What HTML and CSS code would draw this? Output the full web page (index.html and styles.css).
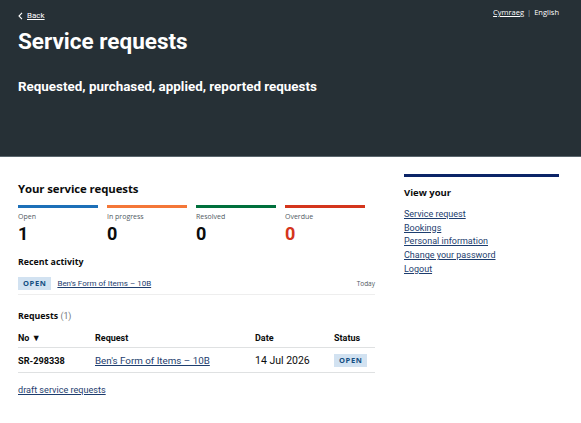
FILE: index.html
```html
<!DOCTYPE html>
<html lang="en">
<head>
<meta charset="utf-8">
<title>Service requests</title>
<link rel="stylesheet" href="styles.css">
</head>
<body>
<header class="hero">
  <div class="hero-top">
    <a class="back" href="#"><svg class="chev" width="5" height="8" viewBox="0 0 5 8"><path d="M4 0.8 L1 4 L4 7.2" fill="none" stroke="#fff" stroke-width="1.1"/></svg><span class="back-text">Back</span></a>
    <div class="lang"><a href="#">Cymraeg</a><span class="sep">|</span><span>English</span></div>
  </div>
  <h1 class="title">Service requests</h1>
  <p class="subtitle">Requested, purchased, applied, reported requests</p>
</header>
<main class="content">
  <section class="primary">
    <h2 class="section-title">Your service requests</h2>
    <div class="stats">
      <div class="stat stat-open"><div class="stat-label">Open</div><div class="stat-num">1</div></div>
      <div class="stat stat-progress"><div class="stat-label">In progress</div><div class="stat-num">0</div></div>
      <div class="stat stat-resolved"><div class="stat-label">Resolved</div><div class="stat-num">0</div></div>
      <div class="stat stat-overdue"><div class="stat-label">Overdue</div><div class="stat-num red">0</div></div>
    </div>
    <h3 class="sub-title">Recent activity</h3>
    <div class="activity">
      <span class="tag">OPEN</span>
      <a class="link" href="#">Ben's Form of Items – 10B</a>
      <span class="when">Today</span>
    </div>
    <h3 class="sub-title req-title">Requests <span class="count">(1)</span></h3>
    <table class="table">
      <thead>
        <tr><th class="c-no">No ▼</th><th class="c-req">Request</th><th class="c-date">Date</th><th class="c-status">Status</th></tr>
      </thead>
      <tbody>
        <tr><td class="c-no strong">SR-298338</td><td><a class="link tlink" href="#">Ben's Form of Items – 10B</a></td><td>14 Jul 2026</td><td><span class="tag">OPEN</span></td></tr>
      </tbody>
    </table>
    <a class="link draft" href="#">draft service requests</a>
  </section>
  <aside class="side">
    <h3 class="side-title">View your</h3>
    <ul class="side-links">
      <li><a href="#">Service request</a></li>
      <li><a href="#">Bookings</a></li>
      <li><a href="#">Personal information</a></li>
      <li><a href="#">Change your password</a></li>
      <li><a href="#">Logout</a></li>
    </ul>
  </aside>
</main>
</body>
</html>
```
FILE: styles.css
```css
* { box-sizing: border-box; }
body {
  margin: 0;
  font-family: Roboto, "Liberation Sans", sans-serif;
  color: #0b0c0c;
  background: #fff;
}
a { color: inherit; }
.hero {
  background: #263036;
  color: #fff;
  height: 157px;
  padding: 7px 22px 0 18px;
  border-bottom: 1px solid #5a666d;
}
.hero-top {
  display: flex;
  justify-content: space-between;
  align-items: flex-start;
}
.back {
  font-size: 8px;
  color: #fff;
  text-decoration: none;
  display: flex;
  align-items: center;
  gap: 4px;
  margin-top: 4px;
  line-height: 10px;
}
.chev { display: block; }
.back-text { text-decoration: underline; }
.lang {
  font-family: "Open Sans", "Noto Sans", sans-serif;
  font-size: 7.5px;
  line-height: 10px;
  display: flex;
  gap: 3px;
  color: #fff;
}
.lang .sep { color: #aab2b6; }
.title {
  margin: 6px 0 0;
  font-size: 22.5px;
  font-weight: 700;
  line-height: 28px;
}
.subtitle {
  margin: 24px 0 0;
  font-size: 13.4px;
  font-weight: 700;
  line-height: 16px;
}
.content {
  display: flex;
  padding: 17px 22px 0 18px;
  gap: 29px;
}
.primary { width: 357px; }
.section-title {
  font-family: "Open Sans", "Noto Sans", sans-serif;
  font-size: 11.4px;
  letter-spacing: -0.1px;
  font-weight: 700;
  margin: 6px 0 0;
  line-height: 18px;
}
.stats {
  display: grid;
  grid-template-columns: repeat(4, 80px);
  gap: 9px;
  margin-top: 7px;
}
.stat { border-top: 3px solid #1d70b8; }
.stat-progress { border-color: #f47738; }
.stat-resolved { border-color: #00703c; }
.stat-overdue { border-color: #d4351c; }
.stat-label {
  font-family: "Open Sans", "Noto Sans", sans-serif;
  font-size: 7px;
  color: #505a5f;
  margin-top: 4px;
  line-height: 10px;
}
.stat-num {
  font-size: 18px;
  font-weight: 700;
  line-height: 20px;
  margin-top: 2px;
}
.stat-num.red { color: #d4351c; }
.sub-title {
  font-family: "Open Sans", "Noto Sans", sans-serif;
  font-size: 8.8px;
  font-weight: 700;
  margin: 11px 0 0;
  line-height: 14px;
}
.activity {
  display: flex;
  align-items: center;
  gap: 6px;
  margin-top: 8px;
  padding-bottom: 4px;
  border-bottom: 1px solid #eeeeee;
}
.tag {
  display: inline-block;
  background: #d2e2f1;
  color: #144e81;
  font-family: "Open Sans", "Noto Sans", sans-serif;
  font-weight: 700;
  font-size: 7.5px;
  letter-spacing: 0.6px;
  padding: 1px 5px;
  line-height: 11px;
}
.link {
  color: #1d3d6e;
  font-size: 8px;
}
.tlink { font-size: 9.8px; }
.when {
  margin-left: auto;
  font-family: "Open Sans", "Noto Sans", sans-serif;
  font-size: 6.5px;
  color: #505a5f;
}
.req-title { margin-top: 14px; }
.count { font-weight: 400; color: #6f777b; font-family: Roboto, sans-serif; }
.table {
  width: 100%;
  border-collapse: collapse;
  margin-top: 6px;
  font-size: 10.5px;
}
.table th {
  text-align: left;
  font-weight: 700;
  font-size: 9px;
  padding: 4px 0 4px;
  border-bottom: 1px solid #dfe1e2;
}
.table td {
  padding: 5px 0 5px;
  border-bottom: 1px solid #dfe1e2;
}
.c-no { width: 77px; }
.c-req { width: 160px; }
.c-date { width: 79px; }
.strong { font-weight: 700; font-size: 9.2px; }
.draft {
  display: inline-block;
  margin-top: 12px;
  font-size: 9.1px;
}
.side {
  width: 155px;
  border-top: 3px solid #0b2467;
}
.side-title {
  font-family: "Open Sans", "Noto Sans", sans-serif;
  font-size: 9.5px;
  font-weight: 700;
  margin: 9px 0 0;
  line-height: 14px;
}
.side-links {
  list-style: none;
  margin: 8px 0 0;
  padding: 0;
  font-size: 9px;
}
.side-links li { line-height: 13.7px; }
.side-links a {
  color: #1d3d6e;
  font-size: 9px;
}
```
